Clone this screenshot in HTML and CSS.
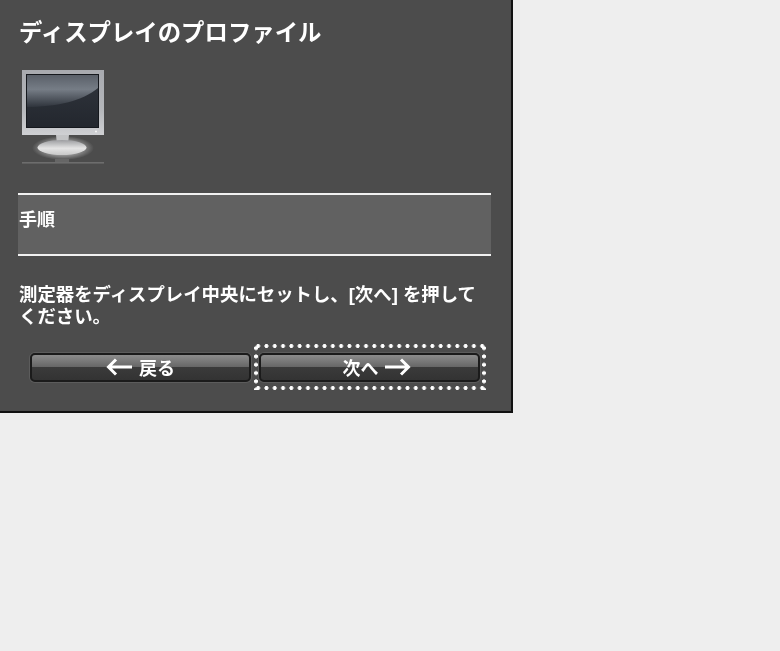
FILE: index.html
```html
<!DOCTYPE html>
<html lang="ja">
<head>
<meta charset="utf-8">
<title>ディスプレイのプロファイル</title>
<link rel="stylesheet" href="styles.css">
</head>
<body>
<main class="panel">
  <h1 class="title">ディスプレイのプロファイル</h1>
  <svg class="monitor" width="84" height="96" viewBox="0 0 84 96" aria-hidden="true">
    <defs>
      <linearGradient id="bezel" x1="0" y1="0" x2="0" y2="1">
        <stop offset="0" stop-color="#a8aaaf"/>
        <stop offset="0.6" stop-color="#b4b6ba"/>
        <stop offset="1" stop-color="#cfd0d3"/>
      </linearGradient>
      <linearGradient id="screen" x1="0" y1="0" x2="0" y2="1">
        <stop offset="0" stop-color="#30353d"/>
        <stop offset="1" stop-color="#23272e"/>
      </linearGradient>
      <linearGradient id="gloss" x1="0" y1="0" x2="0" y2="1">
        <stop offset="0" stop-color="#5a6069"/>
        <stop offset="0.45" stop-color="#767d86"/>
        <stop offset="1" stop-color="#2f343c"/>
      </linearGradient>
      <radialGradient id="glow">
        <stop offset="0.6" stop-color="#ffffff" stop-opacity="0.4"/>
        <stop offset="1" stop-color="#ffffff" stop-opacity="0"/>
      </radialGradient>
      <linearGradient id="foot" x1="0" y1="0" x2="0" y2="1">
        <stop offset="0" stop-color="#9c9da0"/>
        <stop offset="0.55" stop-color="#e4e4e4"/>
        <stop offset="1" stop-color="#c8c8c8"/>
      </linearGradient>
    </defs>
    <rect x="1" y="1" width="82" height="65" fill="url(#bezel)"/>
    <rect x="5" y="5" width="73" height="54" fill="#15181d"/>
    <rect x="6" y="6" width="71" height="52" fill="url(#screen)"/>
    <path d="M6 6H77V19C62 32 34 38 6 38Z" fill="url(#gloss)"/>
    <circle cx="75" cy="62.5" r="1" fill="#f4f4f4"/>
    <ellipse cx="42" cy="79" rx="31" ry="12" fill="url(#glow)"/>
    <path d="M35 66H48L47 75H36Z" fill="#c2c3c5"/>
    <ellipse cx="41" cy="78.5" rx="24.5" ry="7.5" fill="url(#foot)"/>
    <rect x="1" y="93" width="82" height="1.6" fill="#6d6d6d"/>
    <rect x="34" y="90" width="14" height="3" fill="#666"/>
  </svg>
  <section class="band"><h2 class="band-title">手順</h2></section>
  <p class="message">測定器をディスプレイ中央にセットし、[次へ] を押して<br>ください。</p>
  <div class="actions">
    <button class="btn" type="button">
      <svg class="arrow" width="26" height="18" viewBox="0 0 26 18" aria-hidden="true"><path d="M26 9H3M10 1.5L2.5 9l7.5 7.5" fill="none" stroke="#fff" stroke-width="3"/></svg>
      <span>戻る</span>
    </button>
    <div class="focus">
      <button class="btn btn-next" type="button">
        <span>次へ</span>
        <svg class="arrow" width="26" height="18" viewBox="0 0 26 18" aria-hidden="true"><path d="M0 9H23M16 1.5L23.5 9 16 16.5" fill="none" stroke="#fff" stroke-width="3"/></svg>
      </button>
    </div>
  </div>
</main>
</body>
</html>
```
FILE: styles.css
```css
* { box-sizing: border-box; }
html, body { margin: 0; padding: 0; }
body {
  width: 780px;
  height: 651px;
  overflow: hidden;
  background: #eeeeee;
  font-family: "Liberation Sans", "Noto Sans CJK JP", sans-serif;
  color: #fff;
}
.panel {
  width: 513px;
  height: 413px;
  padding: 0 20px 0 18px;
  background: #4c4c4c;
  border-right: 2px solid #111;
  border-bottom: 2px solid #111;
  display: flex;
  flex-direction: column;
}
.title {
  margin: 18px 0 0 1px;
  font-size: 23.4px;
  line-height: 30px;
  font-weight: 700;
  white-space: nowrap;
  filter: blur(0.35px);
}
.monitor {
  display: block;
  margin: 21px 0 0 3px;
  filter: blur(0.6px);
}
.band {
  margin-top: 28px;
  height: 63px;
  background: #616161;
  border-top: 2px solid #f1f1f1;
  border-bottom: 2px solid #f1f1f1;
}
.band-title {
  margin: 14px 0 0 1px;
  font-size: 18px;
  line-height: 22px;
  font-weight: 700;
  filter: blur(0.35px);
}
.message {
  margin: 28px 0 0 1px;
  font-size: 18.4px;
  line-height: 22px;
  font-weight: 700;
  white-space: nowrap;
  filter: blur(0.35px);
}
.actions {
  margin-top: 16px;
  padding-left: 12px;
  display: flex;
  align-items: center;
  gap: 3px;
}
.focus {
  width: 232px;
  height: 46px;
  padding-left: 5px;
  background:
    radial-gradient(circle, #fff 1.7px, transparent 2.2px) 0 0 / 8.3px 4px repeat-x,
    radial-gradient(circle, #fff 1.7px, transparent 2.2px) 0 100% / 8.3px 4px repeat-x,
    radial-gradient(circle, #fff 1.7px, transparent 2.2px) 0 0 / 4px 8.3px repeat-y,
    radial-gradient(circle, #fff 1.7px, transparent 2.2px) 100% 0 / 4px 8.3px repeat-y;
  display: flex;
  align-items: center;
}
.btn {
  width: 221px;
  height: 29px;
  padding: 0;
  border: 2px solid #1b1b1b;
  border-radius: 5px;
  box-shadow: 0 0 0 1px #5c5c5c;
  background: linear-gradient(to bottom, #8c8c8c 0, #666 48%, #3a3a3a 50%, #333 100%);
  color: #fff;
  font-family: inherit;
  font-size: 18px;
  font-weight: 700;
  display: flex;
  align-items: center;
  justify-content: center;
  gap: 7px;
}
.btn span, .arrow { filter: blur(0.35px); }
.btn-next { padding-left: 14px; gap: 6px; }
.arrow { display: block; }
```
